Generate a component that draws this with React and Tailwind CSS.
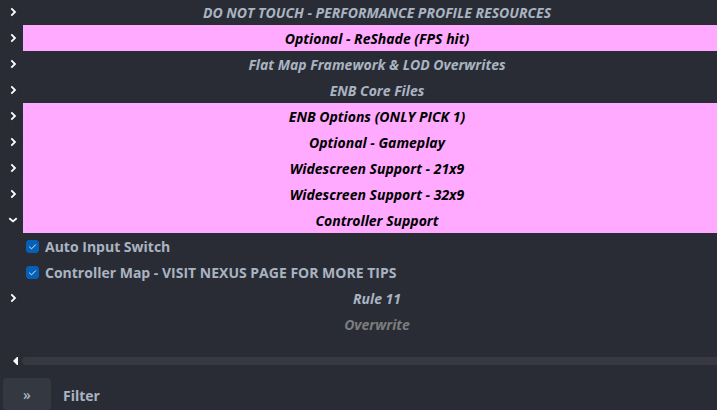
import React, { useState } from "react";

const groups = [
  { title: "DO NOT TOUCH - PERFORMANCE PROFILE RESOURCES" },
  { title: "Optional - ReShade (FPS hit)", highlight: true },
  { title: "Flat Map Framework & LOD Overwrites" },
  { title: "ENB Core Files" },
  { title: "ENB Options (ONLY PICK 1)", highlight: true },
  { title: "Optional - Gameplay", highlight: true },
  { title: "Widescreen Support - 21x9", highlight: true },
  { title: "Widescreen Support - 32x9", highlight: true },
  {
    title: "Controller Support",
    highlight: true,
    open: true,
    mods: ["Auto Input Switch", "Controller Map - VISIT NEXUS PAGE FOR MORE TIPS"],
  },
  { title: "Rule 11" },
];

function Chevron({ open }) {
  return (
    <svg width="10" height="10" viewBox="0 0 10 10" fill="none" stroke="#ffffff" strokeWidth="1.8" aria-hidden="true">
      {open ? <path d="M1.3 3.2 L5 6.4 L8.7 3.2" /> : <path d="M3.3 1.3 L7 5 L3.3 8.7" />}
    </svg>
  );
}

function Mod({ name }) {
  const [checked, setChecked] = useState(true);
  return (
    <li className="flex h-[26px] items-center pl-[26px]">
      <label className="flex items-center gap-1.5">
        <span className="grid size-[13px]">
          <input
            type="checkbox"
            checked={checked}
            onChange={(e) => setChecked(e.target.checked)}
            className="col-start-1 row-start-1 size-[13px] appearance-none rounded-[3px] border border-[#0560b8] checked:bg-[#0560b8]"
          />
          {checked && (
            <svg
              className="pointer-events-none col-start-1 row-start-1"
              width="13"
              height="13"
              viewBox="0 0 13 13"
              fill="none"
              stroke="#dbe9f7"
              strokeWidth="1"
              aria-hidden="true"
            >
              <path d="M3.2 6.7 L5.5 8.9 L9.8 4.5" />
            </svg>
          )}
        </span>
        <span className="pt-0.5">{name}</span>
      </label>
    </li>
  );
}

function Group({ group }) {
  const [open, setOpen] = useState(Boolean(group.open));
  return (
    <li>
      <div className="flex h-[26px]">
        <button
          type="button"
          aria-label={group.title}
          aria-expanded={open}
          onClick={() => setOpen(!open)}
          className="flex w-[23px] shrink-0 items-center justify-center pl-[3px]"
        >
          <Chevron open={open} />
        </button>
        <div
          className={
            group.highlight
              ? "flex grow items-center justify-center bg-[#ffaaff] pt-0.5 pl-3.5 text-black italic"
              : "flex grow items-center justify-center pt-0.5 pl-3.5 italic"
          }
        >
          {group.title}
        </div>
      </div>
      {open && group.mods && (
        <ul>
          {group.mods.map((name) => (
            <Mod key={name} name={name} />
          ))}
        </ul>
      )}
    </li>
  );
}

export default function App() {
  return (
    <div className="min-h-screen overflow-hidden bg-[#2a2c35] font-['Open_Sans','Noto_Sans',sans-serif] text-sm font-bold whitespace-nowrap text-[#a9b4c2]">
      <ul className="-mt-px">
        {groups.map((group) => (
          <Group key={group.title} group={group} />
        ))}
        <li className="flex h-[26px] items-center justify-center pt-0.5 pl-[37px] text-[#7c7c7e] italic">Overwrite</li>
      </ul>
      <div className="mt-5 flex h-2 items-center gap-1 pl-[13px]">
        <button type="button" aria-label="Scroll left">
          <svg width="5" height="8" viewBox="0 0 5 8" fill="#ffffff" className="block" aria-hidden="true">
            <path d="M5 0 V8 H4 L0 4 L4 0 Z" />
          </svg>
        </button>
        <div className="h-2 grow rounded-l-full bg-[#373842]" />
      </div>
      <div className="mt-[13px] flex h-8 items-center gap-3 pl-[3px]">
        <button type="button" className="h-8 w-12 rounded-[4px] bg-[#343841] pt-0.5 font-semibold">
          »
        </button>
        <input
          type="text"
          aria-label="Filter"
          placeholder="Filter"
          className="h-8 min-w-0 grow bg-transparent pt-0.5 outline-none placeholder:text-[#a9b4c2]"
        />
      </div>
    </div>
  );
}
